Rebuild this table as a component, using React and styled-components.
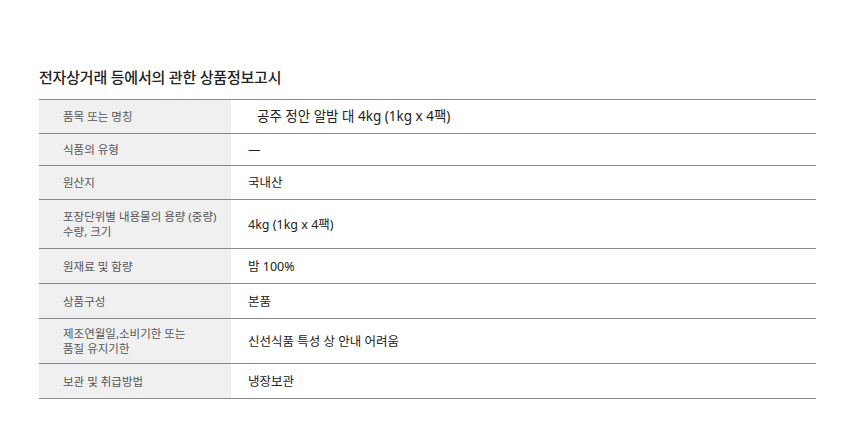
import React from 'react';
import styled, {createGlobalStyle} from 'styled-components';

const GlobalStyle = createGlobalStyle`
  body {
    margin: 0;
    background: #fff;
    font-family: "Noto Sans", "Noto Sans CJK KR", sans-serif;
  }
`;

const Page = styled.div`
  padding: 66px 44px 0 39px;
`;

const Title = styled.h2`
  margin: 0 0 11px;
  font-size: 15px;
  font-weight: 500;
  color: #222;
  letter-spacing: -0.2px;
  line-height: 22px;
`;

const Table = styled.table`
  width: 777px;
  border-collapse: collapse;
  border-top: 1px solid #8a8a8a;
`;

const Row = styled.tr`
  border-bottom: 1px solid #8a8a8a;
  height: ${p => p.h}px;
`;

const Label = styled.th`
  width: 168px;
  padding: 0 0 0 24px;
  background: #f0f0f0;
  text-align: left;
  font-size: 11.5px;
  font-weight: 400;
  color: #555;
  line-height: 15px;
`;

const Value = styled.td`
  padding: 0 0 0 ${p => (p.indent ? 26 : 17)}px;
  font-size: ${p => (p.big ? 13.5 : 12.5)}px;
  color: #222;
  line-height: 17px;
`;

const rows = [
  {label: '품목 또는 명칭', value: '공주 정안 알밤 대 4kg (1kg x 4팩)', h: 34, first: true},
  {label: '식품의 유형', value: '—', h: 32},
  {label: '원산지', value: '국내산', h: 34},
  {label: <>포장단위별 내용물의 용량 (중량)<br/>수량, 크기</>, value: '4kg (1kg x 4팩)', h: 49},
  {label: '원재료 및 함량', value: '밤 100%', h: 35},
  {label: '상품구성', value: '본품', h: 35},
  {label: <>제조연월일,소비기한 또는<br/>품질 유지기한</>, value: '신선식품 특성 상 안내 어려움', h: 45},
  {label: '보관 및 취급방법', value: '냉장보관', h: 35},
];

const App = () => {
    return (
        <Page>
            <GlobalStyle/>
            <Title>전자상거래 등에서의 관한 상품정보고시</Title>
            <Table>
                <tbody>
                {rows.map((r, i) => (
                    <Row key={i} h={r.h}>
                        <Label>{r.label}</Label>
                        <Value indent={r.first} big={r.first}>{r.value}</Value>
                    </Row>
                ))}
                </tbody>
            </Table>
        </Page>
    );
};

export default App;
